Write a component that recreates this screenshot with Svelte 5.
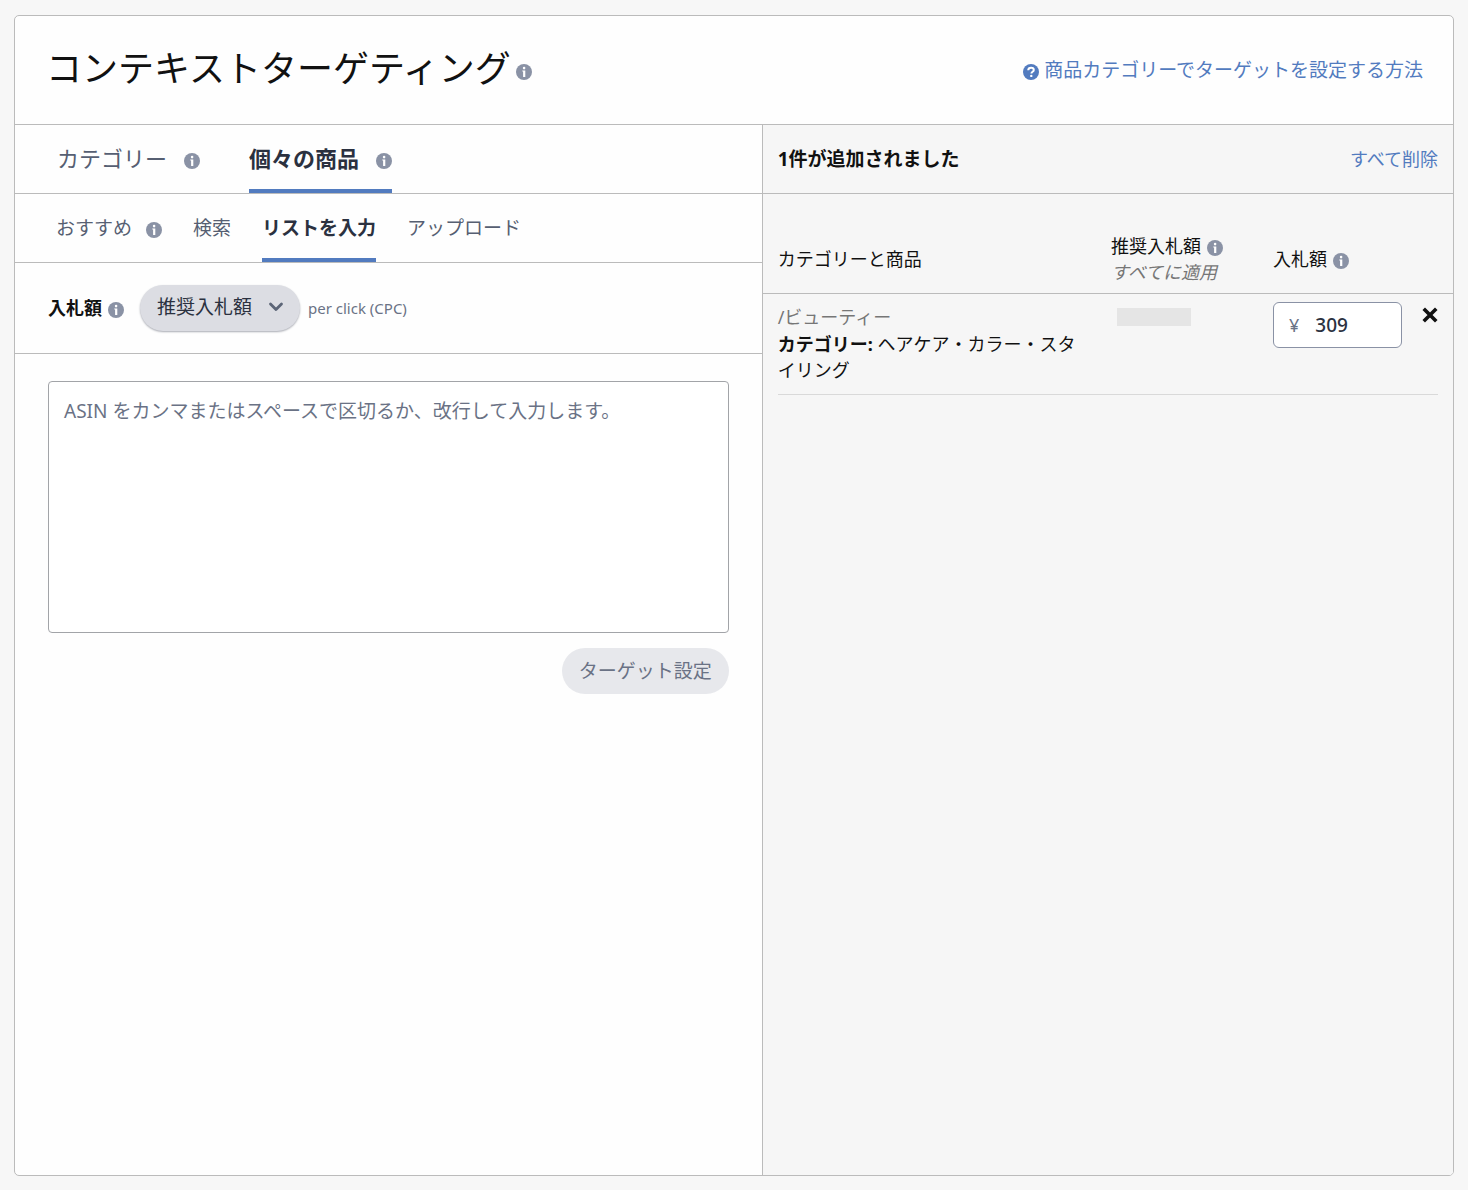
<script lang="ts">
    let tabs = [
        { id: 'category', label: 'カテゴリー', info: true },
        { id: 'products', label: '個々の商品', info: true }
    ];
    let subTabs = [
        { id: 'suggested', label: 'おすすめ', info: true },
        { id: 'search', label: '検索', info: false },
        { id: 'list', label: 'リストを入力', info: false },
        { id: 'upload', label: 'アップロード', info: false }
    ];
    let activeTab = $state('products');
    let activeSubTab = $state('list');
    let asins = $state('');
    let targets = $state([
        { path: '/ビューティー', name: 'ヘアケア・カラー・スタイリング', bid: '309' }
    ]);

    function removeTarget(index: number) {
        targets.splice(index, 1);
    }
</script>

{#snippet infoIcon()}
    <svg class="info" viewBox="0 0 16 16" aria-hidden="true">
        <circle cx="8" cy="8" r="8" fill="#8a92a5" />
        <path d="M6.3 6.4h3v6.600H7.100V7.600h-.8z" fill="#fff" />
        <circle cx="8.1" cy="4.1" r="1.3" fill="#fff" />
    </svg>
{/snippet}

<main class="card">
    <header class="card__header">
        <h1>コンテキストターゲティング{@render infoIcon()}</h1>
        <a class="help" href="#help">
            <svg viewBox="0 0 16 16" aria-hidden="true">
                <circle cx="8" cy="8" r="8" fill="#527bbf" />
                <path d="M5.2 6.2C5.3 4.500 6.400 3.700 8.100 3.700c1.600 0 2.700.9 2.700 2.200 0 1.900-2.400 1.800-2.400 3.500" fill="none" stroke="#fff" stroke-width="2" />
                <circle cx="8.300" cy="11.900" r="1.200" fill="#fff" />
            </svg>
            <span>商品カテゴリーでターゲットを設定する方法</span>
        </a>
    </header>

    <div class="columns">
        <section class="editor">
            <nav class="tabs">
                {#each tabs as tab}
                    <button class="tab" class:active={activeTab === tab.id} onclick={() => (activeTab = tab.id)}>
                        {tab.label}
                        {#if tab.info}{@render infoIcon()}{/if}
                    </button>
                {/each}
            </nav>
            <nav class="tabs tabs--sub">
                {#each subTabs as tab}
                    <button class="tab" class:active={activeSubTab === tab.id} onclick={() => (activeSubTab = tab.id)}>
                        {tab.label}
                        {#if tab.info}{@render infoIcon()}{/if}
                    </button>
                {/each}
            </nav>

            <div class="bid">
                <label class="bid__label" for="bid-type">入札額{@render infoIcon()}</label>
                <div class="bid__select">
                    <select id="bid-type">
                        <option>推奨入札額</option>
                    </select>
                    <svg viewBox="0 0 16 10" aria-hidden="true">
                        <path d="M2.500 2l5.500 5.600L13.500 2" fill="none" stroke="#5c6577" stroke-width="2.800" stroke-linecap="round" stroke-linejoin="round" />
                    </svg>
                </div>
                <span class="bid__unit">per click (CPC)</span>
            </div>

            <div class="list">
                <textarea bind:value={asins} aria-label="ASIN" placeholder="ASIN をカンマまたはスペースで区切るか、改行して入力します。"></textarea>
                <button class="submit" disabled={!asins}>ターゲット設定</button>
            </div>
        </section>

        <section class="added">
            <div class="added__header">
                <h2>{targets.length}件が追加されました</h2>
                <button class="clear" onclick={() => (targets = [])}>すべて削除</button>
            </div>
            <table>
                <thead>
                    <tr>
                        <th class="col-name">カテゴリーと商品</th>
                        <th class="col-suggested">
                            <span class="th-label">推奨入札額{@render infoIcon()}</span>
                            <button class="apply">すべてに適用</button>
                        </th>
                        <th class="col-bid"><span class="th-label">入札額{@render infoIcon()}</span></th>
                        <th class="col-remove"></th>
                    </tr>
                </thead>
                <tbody>
                    {#each targets as target, i}
                        <tr>
                            <td class="col-name">
                                <div class="path">{target.path}</div>
                                <div><b>カテゴリー:</b> {target.name}</div>
                            </td>
                            <td class="col-suggested"><div class="loading"></div></td>
                            <td class="col-bid">
                                <label class="amount">
                                    <span>¥</span>
                                    <input type="text" bind:value={target.bid} aria-label="入札額" />
                                </label>
                            </td>
                            <td class="col-remove">
                                <button class="remove" aria-label="削除" onclick={() => removeTarget(i)}>
                                    <svg viewBox="0 0 16 16" aria-hidden="true">
                                        <path d="M3 3l10 10M13 3L3 13" stroke="#111" stroke-width="3.600" stroke-linecap="square" />
                                    </svg>
                                </button>
                            </td>
                        </tr>
                    {/each}
                </tbody>
            </table>
        </section>
    </div>
</main>

<style>
    :global(body) {
        margin: 0;
        background: #f7f7f7;
    }

    .card {
        display: flex;
        flex-direction: column;
        box-sizing: border-box;
        min-height: calc(100vh - 29px);
        margin: 15px 14px 14px;
        border: 1px solid #bbb;
        border-radius: 5px;
        background: #fefefe;
        color: #111;
        font: 18px/26px "Noto Sans", "Noto Sans CJK JP", sans-serif;
        overflow: hidden;
    }

    button, select, input, textarea {
        margin: 0;
        padding: 0;
        border: 0;
        background: none;
        font: inherit;
        color: inherit;
    }

    button {
        cursor: pointer;
    }

    .info {
        flex: none;
        width: 16px;
        height: 16px;
    }

    .card__header {
        display: flex;
        align-items: center;
        justify-content: space-between;
        height: 108px;
        padding: 0 30px 0 31px;
        border-bottom: 1px solid #bbb;
    }

    h1 {
        display: flex;
        align-items: center;
        gap: 5px;
        margin: 0;
        padding-bottom: 2px;
        font-size: 36px;
        line-height: 48px;
        font-weight: 400;
    }

    h1 .info {
        margin-top: 6px;
    }

    .help {
        display: flex;
        align-items: center;
        gap: 5px;
        color: #527bbf;
        font-size: 19px;
        text-decoration: none;
    }

    .help svg {
        width: 16px;
        height: 16px;
        margin-top: 3px;
    }

    .columns {
        display: grid;
        grid-template-columns: 27fr 25fr;
        flex: 1;
    }

    .tabs {
        display: flex;
        gap: 49px;
        height: 68px;
        padding-left: 42px;
        border-bottom: 1px solid #bbb;
    }

    .tab {
        display: flex;
        align-items: center;
        gap: 17px;
        padding: 2px 0 4px;
        border-radius: 3px 3px 0 0;
        color: #565f72;
        font-size: 22px;
    }

    .tab .info {
        margin-top: 6px;
    }

    .tab.active {
        background: linear-gradient(#527bbf, #527bbf) bottom / 100% 4px no-repeat;
        color: #2b3140;
        font-weight: 700;
    }

    .tabs--sub {
        gap: 31px;
        padding-left: 41px;
    }

    .tabs--sub .tab {
        gap: 14px;
        padding-top: 4px;
        font-size: 19px;
    }

    .tabs--sub .info {
        margin-top: 4px;
    }

    .bid {
        display: flex;
        align-items: center;
        height: 90px;
        padding-left: 33px;
        border-bottom: 1px solid #bbb;
    }

    .bid__label {
        display: flex;
        align-items: center;
        gap: 6px;
        margin-right: 16px;
        font-weight: 700;
    }

    .bid__label .info, .th-label .info {
        margin-top: 4px;
    }

    .bid__select {
        position: relative;
    }

    .bid__select select {
        appearance: none;
        height: 46px;
        padding: 0 47px 2px 17px;
        border-radius: 23px;
        background: #dcdde3;
        box-shadow: 0 1px 2px #a9abb3;
        color: #2b3140;
        font-size: 19px;
    }

    .bid__select svg {
        position: absolute;
        top: 17px;
        right: 16px;
        width: 16px;
        height: 10px;
        pointer-events: none;
    }

    .bid__unit {
        margin-left: 8px;
        color: #6a7285;
        font-size: 15px;
    }

    .list {
        display: flex;
        flex-direction: column;
        align-items: flex-end;
        gap: 15px;
        padding: 27px 33px;
    }

    textarea {
        display: block;
        box-sizing: border-box;
        width: 100%;
        height: 252px;
        padding: 16px 15px;
        border: 1px solid #a2a4a8;
        border-radius: 4px;
        background: #fff;
        font-size: 19px;
        resize: none;
    }

    textarea::placeholder {
        color: #6a7285;
    }

    .submit {
        height: 46px;
        padding: 0 17px;
        border-radius: 23px;
        background: #e7e8ec;
        color: #6a7285;
        font-size: 19px;
    }

    .added {
        border-left: 1px solid #bbb;
        background: #f6f6f6;
    }

    .added__header {
        display: flex;
        align-items: center;
        justify-content: space-between;
        height: 68px;
        padding: 0 15px;
        border-bottom: 1px solid #bbb;
    }

    h2 {
        margin: 0;
        font-size: 19px;
        line-height: 26px;
        font-weight: 700;
    }

    .clear {
        color: #527bbf;
    }

    table {
        width: 100%;
        table-layout: fixed;
        border-collapse: collapse;
    }

    th, td {
        padding: 0;
        text-align: left;
    }

    th {
        height: 99px;
        box-sizing: border-box;
        padding-top: 32px;
        border-bottom: 1px solid #bbb;
        font-weight: 400;
    }

    td {
        position: relative;
        padding: 10px 0 12px;
        vertical-align: top;
    }

    /* row divider stops short of the panel edges */
    td::after {
        content: "";
        position: absolute;
        right: 0;
        bottom: 0;
        left: 0;
        border-bottom: 1px solid #d9d9d9;
    }

    td:first-child::after {
        left: 15px;
    }

    td:last-child::after {
        right: 15px;
    }

    .col-name {
        padding-left: 15px;
        padding-right: 30px;
    }

    .col-suggested {
        width: 162px;
    }

    .col-bid {
        width: 146px;
    }

    .col-remove {
        width: 34px;
    }

    .th-label {
        display: flex;
        align-items: center;
        gap: 6px;
    }

    .apply {
        display: block;
        color: #767676;
        font-style: italic;
    }

    .path {
        margin-bottom: 1px;
        color: #767676;
    }

    .loading {
        width: 74px;
        height: 18px;
        margin: 4px 0 0 6px;
        background: #e5e5e5;
    }

    td.col-bid {
        padding-top: 8px;
    }

    .amount {
        display: flex;
        align-items: center;
        gap: 16px;
        box-sizing: border-box;
        width: 129px;
        height: 46px;
        padding: 0 15px;
        border: 1px solid #8a92a5;
        border-radius: 6px;
        background: #fff;
        color: #6a7285;
    }

    .amount input {
        min-width: 0;
        flex: 1;
        color: #2b3140;
        font-size: 19px;
        font-weight: 500;
    }

    .remove {
        display: block;
        width: 16px;
        height: 16px;
        margin: 3px 0 0 3px;
    }

    .remove svg {
        display: block;
        width: 16px;
        height: 16px;
    }
</style>
